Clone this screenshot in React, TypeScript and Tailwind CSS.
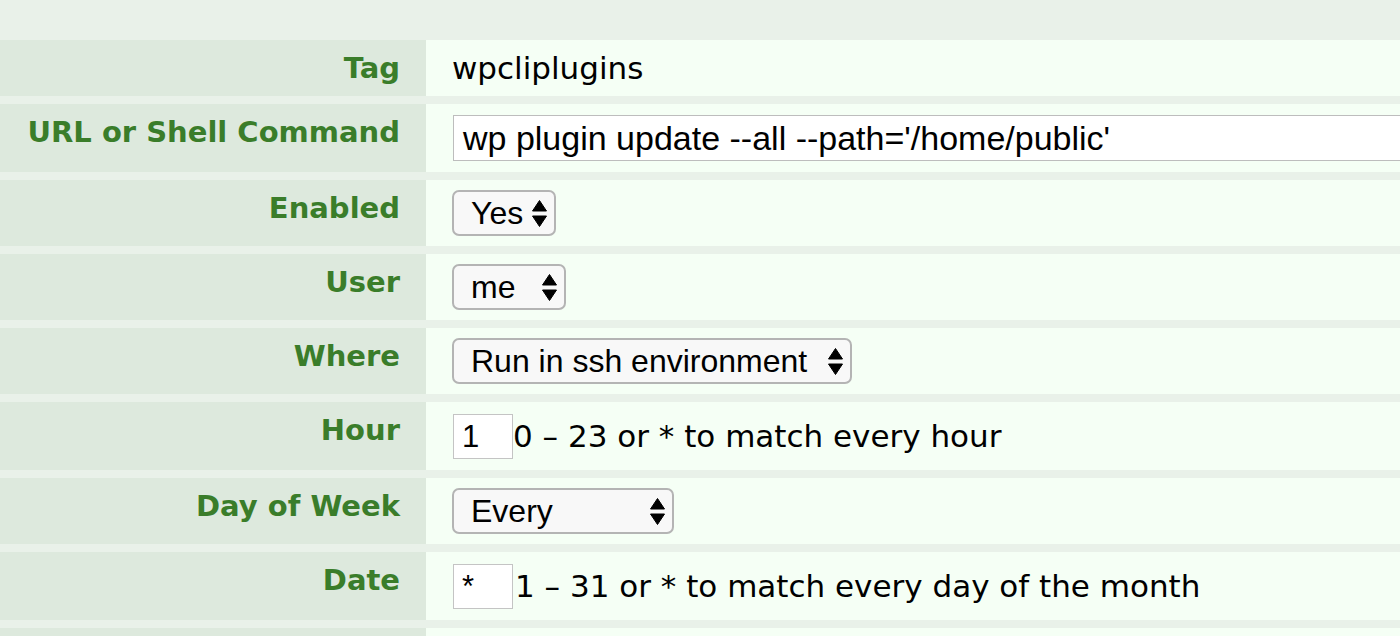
import React from "react";

const labelFont = { fontFamily: '"DejaVu Sans", Verdana, sans-serif' };

function Arrows() {
  return (
    <svg width="15" height="27" viewBox="0 0 15 27" className="shrink-0">
      <path d="M7.5 0.5 L14.5 11 L0.5 11 Z" fill="#000" strokeLinejoin="round" stroke="#000" strokeWidth="1" />
      <path d="M0.5 16 L14.5 16 L7.5 26.5 Z" fill="#000" strokeLinejoin="round" stroke="#000" strokeWidth="1" />
    </svg>
  );
}

function Select({ text, w }: { text: string; w: string }) {
  return (
    <div
      className={`${w} h-[46px] flex items-center justify-between rounded-[7px] border-2 border-[#b4b4b4] bg-[#f8f8f8] pl-[17px] pr-[7px] text-[32px] text-black font-['Liberation_Sans',Arial,sans-serif]`}
    >
      <span className="leading-none">{text}</span>
      <Arrows />
    </div>
  );
}

function SmallInput({ text }: { text: string }) {
  return (
    <div className="w-[60px] h-[45px] flex items-center border border-[#c4c4c4] bg-white pl-[8px] text-[31px] text-black font-['Liberation_Sans',Arial,sans-serif] shrink-0">
      <span className="leading-none">{text}</span>
    </div>
  );
}

function Row({
  label,
  h,
  children,
}: {
  label?: string;
  h: string;
  children?: React.ReactNode;
}) {
  return (
    <div className={`flex ${h} mb-[8px]`}>
      <div
        className="w-[426px] shrink-0 bg-[#dde9dd] text-right pr-[26px] pt-[12px] text-[29px] font-bold text-[#3a7d2a] leading-[1.164]"
        style={labelFont}
      >
        {label}
      </div>
      <div className="flex-1 min-w-0 bg-[#f5fff5] pl-[26px] flex items-center overflow-hidden">
        {children}
      </div>
    </div>
  );
}

const valueText = "text-[31px] text-black whitespace-nowrap";

export default function App() {
  return (
    <div className="w-[1400px] h-[636px] overflow-hidden bg-[#e9f1e9]">
      <div className="h-[40px]" />
      <Row label="Tag" h="h-[56px]">
        <span className={valueText} style={labelFont}>
          wpcliplugins
        </span>
      </Row>
      <Row label="URL or Shell Command" h="h-[68px]">
        <div className="ml-[1px] mt-[-1px] w-[1000px] h-[46px] shrink-0 flex items-center border border-[#bdbdbd] bg-white pl-[9px] text-[34px] text-black font-['Liberation_Sans',Arial,sans-serif] whitespace-nowrap">
          <span className="leading-none">wp plugin update --all --path='/home/public'</span>
        </div>
      </Row>
      <Row label="Enabled" h="h-[66px]">
        <Select text="Yes" w="w-[104px]" />
      </Row>
      <Row label="User" h="h-[66px]">
        <Select text="me" w="w-[114px]" />
      </Row>
      <Row label="Where" h="h-[66px]">
        <Select text="Run in ssh environment" w="w-[400px]" />
      </Row>
      <Row label="Hour" h="h-[68px]">
        <div className="ml-[1px] flex items-center">
          <SmallInput text="1" />
          <span className={valueText} style={labelFont}>
            0 – 23 or * to match every hour
          </span>
        </div>
      </Row>
      <Row label="Day of Week" h="h-[66px]">
        <Select text="Every" w="w-[222px]" />
      </Row>
      <Row label="Date" h="h-[68px]">
        <div className="ml-[1px] flex items-center">
          <SmallInput text="*" />
          <span className={`${valueText} ml-[2px]`} style={labelFont}>
            1 – 31 or * to match every day of the month
          </span>
        </div>
      </Row>
      <Row h="h-[66px]" />
    </div>
  );
}
